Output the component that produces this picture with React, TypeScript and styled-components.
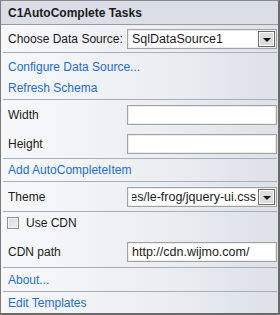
import styled, { createGlobalStyle } from "styled-components";

const GlobalStyle = createGlobalStyle`
    html, body {
        margin: 0;
        padding: 0;
        background: #ffffff;
    }
    body {
        font-family: "Liberation Sans", Arial, sans-serif;
        font-size: 12px;
        color: #1b1b1b;
    }
`;

const Panel = styled.div`
    box-sizing: border-box;
    width: 280px;
    height: 315px;
    display: flex;
    flex-direction: column;
    border-top: 1px solid #8a8a8a;
    border-left: 1px solid #7a7a7a;
    border-right: 2px solid #6a6a6a;
    border-bottom: 2px solid #6a6a6a;
    background: linear-gradient(to right, #f7f8fa 0%, #eceef2 55%, #dde1e8 100%);
`;

const Header = styled.div`
    height: 23px;
    display: flex;
    align-items: center;
    padding-left: 7px;
    font-weight: bold;
    font-size: 12px;
    background: #dadee6;
    border-bottom: 1px solid #979aa0;
`;

const Section = styled.div<{ $h: number; $pt?: number }>`
    height: ${(p) => p.$h}px;
    box-sizing: border-box;
    padding-top: ${(p) => p.$pt ?? 0}px;
    display: flex;
    flex-direction: column;
`;

const Separator = styled.div`
    height: 1px;
    margin: 0 1px 0 2px;
    background: #a4aebd;
`;

const Row = styled.div<{ $h: number }>`
    height: ${(p) => p.$h}px;
    display: flex;
    align-items: center;
    padding-left: 7px;
    padding-right: 1px;
`;

const Label = styled.span`
    flex: 1;
    white-space: nowrap;
`;

const Link = styled.a`
    color: #236ed4;
    text-decoration: none;
    cursor: pointer;
    white-space: nowrap;
`;

const Field = styled.div`
    box-sizing: border-box;
    width: 150px;
    height: 20px;
    display: flex;
    align-items: center;
    background: #ffffff;
    border: 1px solid #a3a3a3;
    box-shadow: inset 0 0 0 1px #ececec;
    padding: 0 1px 0 4px;
    overflow: hidden;
`;

const FieldText = styled.div<{ $end?: boolean }>`
    flex: 1;
    min-width: 0;
    display: flex;
    justify-content: ${(p) => (p.$end ? "flex-end" : "flex-start")};
    overflow: hidden;
    white-space: nowrap;
    font-size: 12.5px;
`;

const DropButton = styled.div`
    box-sizing: border-box;
    flex: none;
    width: 17px;
    height: 16px;
    margin-left: 2px;
    display: flex;
    align-items: center;
    justify-content: center;
    border: 1px solid #6b6b6b;
    box-shadow: inset 0 0 0 1px #ffffff;
    background: #dcdcdc;
`;

const Arrow = styled.div`
    width: 0;
    height: 0;
    margin-top: 2px;
    border-left: 4px solid transparent;
    border-right: 4px solid transparent;
    border-top: 4px solid #111111;
`;

const CheckRow = styled.div`
    height: 25px;
    display: flex;
    align-items: flex-start;
    padding: 5px 0 0 6px;
    box-sizing: border-box;
    gap: 7px;
`;

const CheckBox = styled.div`
    box-sizing: border-box;
    width: 12px;
    height: 12px;
    border: 1px solid #8e8f8f;
    background: linear-gradient(135deg, #d8d8d8 0%, #e6e6e6 50%, #f2f2f2 100%);
    box-shadow: inset 0 0 0 1px #f4f4f4;
`;

const CheckLabel = styled.span`
    line-height: 12px;
    white-space: nowrap;
`;

function Select({ value, end }: { value: string; end?: boolean }) {
    return (
        <Field>
            <FieldText $end={end}>{value}</FieldText>
            <DropButton>
                <Arrow />
            </DropButton>
        </Field>
    );
}

function App() {
    return (
        <>
            <GlobalStyle />
            <Panel>
                <Header>C1AutoComplete Tasks</Header>
                <Section $h={27}>
                    <Row $h={27}>
                        <Label>Choose Data Source:</Label>
                        <Select value="SqlDataSource1" />
                    </Row>
                </Section>
                <Separator />
                <Section $h={46} $pt={3}>
                    <Row $h={21}>
                        <Link>Configure Data Source...</Link>
                    </Row>
                    <Row $h={21}>
                        <Link>Refresh Schema</Link>
                    </Row>
                </Section>
                <Separator />
                <Section $h={58}>
                    <Row $h={29}>
                        <Label>Width</Label>
                        <Field />
                    </Row>
                    <Row $h={29}>
                        <Label>Height</Label>
                        <Field />
                    </Row>
                </Section>
                <Separator />
                <Section $h={22}>
                    <Row $h={22}>
                        <Link>Add AutoCompleteItem</Link>
                    </Row>
                </Section>
                <Separator />
                <Section $h={29}>
                    <Row $h={29}>
                        <Label>Theme</Label>
                        <Select value="themes/le-frog/jquery-ui.css" end />
                    </Row>
                </Section>
                <Separator />
                <Section $h={55}>
                    <CheckRow>
                        <CheckBox />
                        <CheckLabel>Use CDN</CheckLabel>
                    </CheckRow>
                    <Row $h={29}>
                        <Label>CDN path</Label>
                        <Field>
                            <FieldText>http://cdn.wijmo.com/</FieldText>
                        </Field>
                    </Row>
                </Section>
                <Separator />
                <Section $h={23}>
                    <Row $h={23}>
                        <Link>About...</Link>
                    </Row>
                </Section>
                <Separator />
                <Section $h={21}>
                    <Row $h={21}>
                        <Link>Edit Templates</Link>
                    </Row>
                </Section>
            </Panel>
        </>
    );
}

export default App;
